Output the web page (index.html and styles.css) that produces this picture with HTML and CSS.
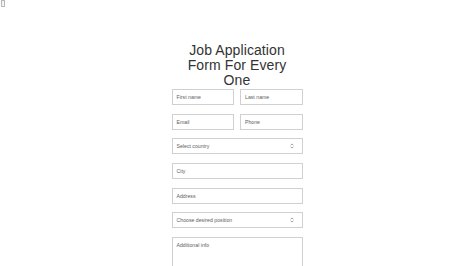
FILE: index.html
```html
<!DOCTYPE html>
<html lang="en">
<head>
<meta charset="utf-8">
<title>Job Application Form</title>
<link rel="stylesheet" href="styles.css">
</head>
<body>
<div class="broken"><svg width="4" height="7" viewBox="0 0 4 7"><rect x="0.5" y="0.5" width="3" height="6" fill="#f4f4f4" stroke="#b8b8b8" stroke-width="1"/></svg></div>
<main class="page">
  <h1 class="title">Job Application Form For Every One</h1>
  <form class="form">
    <div class="row">
      <div class="field"><span class="ph">First name</span></div>
      <div class="field"><span class="ph">Last name</span></div>
    </div>
    <div class="row">
      <div class="field"><span class="ph">Email</span></div>
      <div class="field"><span class="ph">Phone</span></div>
    </div>
    <div class="field select"><span class="ph">Select country</span>
      <svg class="arrows" width="4" height="6" viewBox="0 0 4 6"><path d="M0.6 2.3 L2 0.9 L3.4 2.3 M0.6 3.7 L2 5.1 L3.4 3.7" fill="none" stroke="#888" stroke-width="0.8"/></svg>
    </div>
    <div class="field"><span class="ph">City</span></div>
    <div class="field"><span class="ph">Address</span></div>
    <div class="field select"><span class="ph">Choose desired position</span>
      <svg class="arrows" width="4" height="6" viewBox="0 0 4 6"><path d="M0.6 2.3 L2 0.9 L3.4 2.3 M0.6 3.7 L2 5.1 L3.4 3.7" fill="none" stroke="#888" stroke-width="0.8"/></svg>
    </div>
    <div class="field area"><span class="ph">Additional info</span></div>
  </form>
</main>
</body>
</html>
```

FILE: styles.css
```css
html, body {
  margin: 0;
  padding: 0;
  background: #ffffff;
}
body {
  font-family: "Liberation Sans", Arial, sans-serif;
  color: #333;
}
.broken {
  position: absolute;
  left: 1px;
  top: 0;
  line-height: 0;
}
.page {
  width: 131px;
  margin: 0 auto;
  padding-top: 43px;
}
.title {
  margin: 0 auto 1px;
  width: 112px;
  font-size: 14px;
  line-height: 15px;
  font-weight: normal;
  text-align: center;
  color: #333;
  letter-spacing: 0.1px;
}
.form {
  display: flex;
  flex-direction: column;
  gap: 8.67px;
}
.row {
  display: flex;
  gap: 6px;
}
.row .field {
  flex: 1;
}
.field {
  box-sizing: border-box;
  height: 16px;
  border: 1px solid #d0d0d0;
  background: #fff;
  display: flex;
  align-items: center;
  padding-left: 4px;
  padding-right: 8px;
}
.ph {
  font-size: 5.2px;
  line-height: 6px;
  color: #5e5e5e;
}
.select {
  justify-content: space-between;
}
.arrows {
  display: block;
}
.area {
  height: 44px;
  align-items: flex-start;
  padding-top: 4px;
}
```
